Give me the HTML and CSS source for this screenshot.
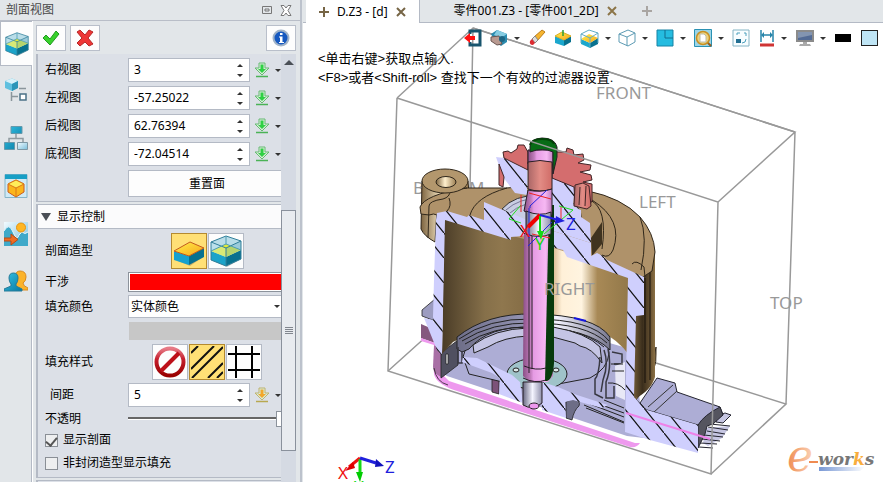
FILE: index.html
```
<!DOCTYPE html>
<html lang="zh-CN">
<head>
    <meta charset="UTF-8">
    <meta name="viewport" content="width=device-width, initial-scale=1.0">
    <title>剖面视图</title>
    <link rel="stylesheet" href="styles.css">
</head>
<body>
    <!-- Shared symbols -->
    <svg class="defs" width="0" height="0" aria-hidden="true">
        <defs>
            <linearGradient id="blue" x1="0" y1="0" x2="1" y2="1">
                <stop offset="0" stop-color="#35c3e6"/><stop offset="1" stop-color="#0878a0"/>
            </linearGradient>
            <linearGradient id="gold" x1="0" y1="0" x2="1" y2="1">
                <stop offset="0" stop-color="#fff04a"/><stop offset="1" stop-color="#f7a51c"/>
            </linearGradient>
            <linearGradient id="sky" x1="0" y1="0" x2="1" y2="1">
                <stop offset="0" stop-color="#f2fbff"/><stop offset="1" stop-color="#79bfdc"/>
            </linearGradient>
        </defs>
        <symbol id="section-box" viewBox="0 0 32 32">
            <path d="M3 26l14 6 14-8-3-3z" fill="#555" opacity=".35"/>
            <path d="M1 7l15-6 15 5v10l-15 7-15-7z" fill="#b9dde8"/>
            <path d="M1 16l15 6v9L1 25z" fill="#1ba3c9"/>
            <path d="M16 22l15-7v9l-15 7z" fill="#08718f"/>
            <path d="M1 16l15-7 15 6-15 7z" fill="#e5ec35"/>
            <path d="M1 7l15 6v9L1 16z" fill="#c0e6f1" opacity=".35"/>
            <path d="M16 13l15-7v9l-15 7z" fill="#6fb2c6" opacity=".4"/>
            <path d="M1 7l15-6 15 5-15 7zM1 7v18l15 6 15-7V6M16 13v18" fill="none" stroke="#317f9a"/>
            <path d="M1 16l15-7 15 6M16 1v8" fill="none" stroke="#4c9cb2"/>
        </symbol>
        <symbol id="arrow-in" viewBox="0 0 16 16">
            <path d="M5 1h6v5h4l-7 7-7-7h4z" fill="#d9efd6" stroke="currentColor" opacity=".8"/>
            <path class="arrow-core" d="M6.500 2.500h3V7h2.500l-4 4-4-4h2.500z"/>
            <path d="M2 14.500h12" stroke="currentColor" stroke-width="1.500"/>
        </symbol>
    </svg>

    <div class="app">
        <aside class="panel">
            <header class="panel-title">
                <span>剖面视图</span>
                <span class="panel-tools">
                    <button type="button" aria-label="还原"><svg width="10" height="8" viewBox="0 0 10 8"><path d="M.5.500h9v7h-9zM3 3h4v2H3z" fill="none" stroke="#777"/></svg></button>
                    <button type="button" aria-label="关闭"><svg width="12" height="11" viewBox="0 0 12 11"><path d="M1 .5h3l2 2.500 2-2.500h3L8 5.500l3 5H8L6 8l-2 2.500H1l3-5z" fill="#fff" stroke="#777"/></svg></button>
                </span>
            </header>
            <div class="panel-main">
                <nav class="rail">
                    <button type="button" class="rail-tab active" aria-label="剖面">
                        <svg width="24" height="24"><use href="#section-box"/></svg>
                    </button>
                    <button type="button" class="rail-tab" aria-label="历史">
                        <svg width="24" height="24" viewBox="0 0 24 24">
                            <path d="M1 3l7-2.500L14 3v7l-6 3-7-3z" fill="#5fc0df"/><path d="M1 3l7-2.500L14 3 8 6z" fill="#d7f1f9"/><path d="M8 6l6-3v7l-6 3z" fill="#2c95b8"/>
                            <path d="M15 10.500h7M7.500 14v9M8 18.500h6" stroke="#8b969c" stroke-width="1.500"/><path d="M16 16h6v6h-6z" fill="#fff" stroke="#4b7287" stroke-width="1.500"/>
                        </svg>
                    </button>
                    <button type="button" class="rail-tab" aria-label="装配">
                        <svg width="24" height="24" viewBox="0 0 24 24">
                            <path d="M12 7v5M5 17v-4.500h14V17" fill="none" stroke="#909ba0" stroke-width="1.500"/>
                            <path d="M7 .5h11v7H7zM.5 16.500h10v7H.5z" fill="url(#blue)" stroke="#6699ab"/><path d="M13.500 16.500h10v7h-10z" fill="url(#sky)" stroke="#7e98a4"/>
                        </svg>
                    </button>
                    <button type="button" class="rail-tab" aria-label="显示">
                        <svg width="24" height="24" viewBox="0 0 24 24">
                            <path d="M1 .5h22v23H1z" fill="#cfeaf5" stroke="#86b4c8"/><path d="M1 .5h22V5H1z" fill="#179fc5"/>
                            <path d="M4 10l8-4 8 4v8l-8 5-8-5z" fill="#fbb51c" stroke="#cb5b20"/><path d="M4 10l8-4 8 4-8 4z" fill="#ffed59" stroke="#d97819"/><path d="M12 14v9" stroke="#d97819"/>
                        </svg>
                    </button>
                    <button type="button" class="rail-tab" aria-label="图像">
                        <svg width="24" height="24" viewBox="0 0 24 24">
                            <path d="M0 0h24v24H0z" fill="url(#sky)"/><path d="M0 9q5-9 9 1t6 3l3-3q3 3 6 0v14H0z" fill="#3fa9c9"/><path d="M0 9q5-9 9 1t6 3l3-3q3 3 6 0" fill="none" stroke="#e7f6fb"/>
                            <circle cx="17" cy="5.500" r="4.500" fill="#ffb622" stroke="#e8930f"/><path d="M0 16h7v-4l7 5.500L7 23v-4H0z" fill="#ef6d22" stroke="#b94a15"/>
                        </svg>
                    </button>
                    <button type="button" class="rail-tab" aria-label="角色">
                        <svg width="24" height="24" viewBox="0 0 24 24">
                            <path d="M11 6q1-5 5-5 6 0 6 6 0 4-3 6 0 3 5 5v2H12z" fill="#fbb32a" stroke="#d98a1e"/>
                            <path d="M5 8q0-5 4.500-5T14 8q0 4-2 6v2l6 3v2H0v-2l7-3v-2Q5 12 5 8z" fill="url(#blue)" stroke="#277b98"/>
                        </svg>
                    </button>
                </nav>

                <div class="panel-content">
                    <div class="actions">
                        <button type="button" class="action" aria-label="确定"><svg width="18" height="16" viewBox="0 0 18 16"><path d="M1 8l3-3 4 4 6-8 3 3-9 11z" fill="#38d12b" stroke="#219a21"/></svg></button>
                        <button type="button" class="action" aria-label="取消"><svg width="18" height="18" viewBox="0 0 18 18"><path d="M1 3l3-2 5 5 4-5 4 2-5 6 5 6-4 2-4-4-5 4-3-3 5-5z" fill="#ee3636" stroke="#b62828"/></svg></button>
                        <button type="button" class="action info" aria-label="信息"><svg width="18" height="18" viewBox="0 0 18 18"><circle cx="9" cy="9" r="7.500" fill="#1558c0" stroke="#9fb2c8" stroke-width="2"/><path d="M8 4h2.500v2H8zM7 7.500h3.500V13H12v1H7v-1h1V8.500H7z" fill="#fff"/></svg></button>
                    </div>
                    <div class="scroll-area">
                        <form class="sections">
                            <section class="group">
                                <div class="group-body">
                                    <div class="row"><label for="right">右视图</label><span class="spin"><input type="text" id="right" value="3"><i></i></span><button type="button" class="pick" aria-label="拾取右视图"><svg width="16" height="16"><use href="#arrow-in"/></svg></button><i class="caret"></i></div>
                                    <div class="row"><label for="left">左视图</label><span class="spin"><input type="text" id="left" value="-57.25022"><i></i></span><button type="button" class="pick" aria-label="拾取左视图"><svg width="16" height="16"><use href="#arrow-in"/></svg></button><i class="caret"></i></div>
                                    <div class="row"><label for="back">后视图</label><span class="spin"><input type="text" id="back" value="62.76394"><i></i></span><button type="button" class="pick" aria-label="拾取后视图"><svg width="16" height="16"><use href="#arrow-in"/></svg></button><i class="caret"></i></div>
                                    <div class="row"><label for="bottom">底视图</label><span class="spin"><input type="text" id="bottom" value="-72.04514"><i></i></span><button type="button" class="pick" aria-label="拾取底视图"><svg width="16" height="16"><use href="#arrow-in"/></svg></button><i class="caret"></i></div>
                                    <div class="row"><span class="label"></span><button type="button" class="reset">重置面</button></div>
                                </div>
                            </section>

                            <section class="group">
                                <h2><i class="fold"></i>显示控制</h2>
                                <div class="group-body display">
                                    <div class="row">
                                        <span class="label">剖面造型</span>
                                        <div class="choices">
                                            <button type="button" class="choice on" aria-label="切除">
                                                <svg width="32" height="32" viewBox="0 0 32 32"><path d="M5 26l12 5 13-9-3-4z" fill="#765" opacity=".4"/><path d="M1 16l15 5v9L1 25z" fill="#16a1ce"/><path d="M16 21l15-8v9l-15 8z" fill="#07718f"/><path d="M1 16L17 7l14 6-15 8z" fill="url(#gold)" stroke="#c35a1d"/></svg>
                                            </button>
                                            <button type="button" class="choice" aria-label="透明"><svg width="32" height="32"><use href="#section-box"/></svg></button>
                                        </div>
                                    </div>
                                    <div class="row"><label for="clash">干涉</label><button type="button" id="clash" class="swatch red" aria-label="干涉颜色"></button></div>
                                    <div class="row"><label for="fill">填充颜色</label><span class="pull"><select id="fill"><option>实体颜色</option></select><i class="caret"></i></span></div>
                                    <div class="row"><span class="label"></span><button type="button" class="swatch gray" aria-label="颜色" disabled></button></div>
                                    <div class="row">
                                        <span class="label">填充样式</span>
                                        <div class="choices">
                                            <button type="button" class="choice" aria-label="无">
                                                <svg width="32" height="32" viewBox="0 0 32 32"><defs><linearGradient id="no" x1="0" y1="0" x2="0" y2="1"><stop offset="0" stop-color="#e77a86"/><stop offset=".4" stop-color="#c51f2d"/><stop offset="1" stop-color="#990000"/></linearGradient></defs><circle cx="16" cy="16" r="13.500" fill="none" stroke="url(#no)" stroke-width="4"/><path d="M25 7L7 25" stroke="#bd1019" stroke-width="4"/></svg>
                                            </button>
                                            <button type="button" class="choice on" aria-label="斜线">
                                                <svg width="32" height="32" viewBox="0 0 32 32"><path d="M0 7l7-7M0 23L23 0M1 32L32 1M17 32l15-15M26 32l6-6" stroke="#111" stroke-width="2"/></svg>
                                            </button>
                                            <button type="button" class="choice" aria-label="网格">
                                                <svg width="32" height="32" viewBox="0 0 32 32"><path d="M8 0v32M24 0v32M0 8h32M0 24h32" stroke="#000" stroke-width="2"/></svg>
                                            </button>
                                        </div>
                                    </div>
                                    <div class="row"><label for="gap" class="sub">间距</label><span class="spin"><input type="text" id="gap" value="5"><i></i></span><button type="button" class="pick amber" aria-label="拾取间距"><svg width="16" height="16"><use href="#arrow-in"/></svg></button><i class="caret"></i></div>
                                    <div class="row"><label for="opaque">不透明</label><input type="range" id="opaque" min="0" max="100" value="100"></div>
                                    <label class="check"><input type="checkbox" checked>显示剖面</label>
                                    <label class="check"><input type="checkbox">非封闭造型显示填充</label>
                                </div>
                            </section>
                            <section class="group next"></section>
                        </form>
                        <div class="scrollbar"><i class="up"></i><div class="thumb"><i></i></div></div>
                    </div>
                </div>
            </div>
        </aside>

        <main class="workspace">
            <div class="tabs">
                <div class="tab current">
                    <svg width="10" height="10" viewBox="0 0 10 10"><path d="M5 0v10M0 5h10" stroke="#766545" stroke-width="2"/></svg>
                    <span>D.Z3 - [d]</span>
                    <button type="button" aria-label="关闭 D.Z3"><svg width="10" height="10" viewBox="0 0 10 10"><path d="M1 1l8 8M9 1L1 9" stroke="#766545" stroke-width="2"/></svg></button>
                </div>
                <div class="tab">
                    <span>零件001.Z3 - [零件001_2D]</span>
                    <button type="button" aria-label="关闭 零件001.Z3"><svg width="10" height="10" viewBox="0 0 10 10"><path d="M1 1l8 8M9 1L1 9" stroke="#8c7548" stroke-width="2"/></svg></button>
                </div>
                <button type="button" class="new-tab" aria-label="新建"><svg width="10" height="10" viewBox="0 0 10 10"><path d="M5 0v10M0 5h10" stroke="#a9a5a2" stroke-width="2"/></svg></button>
            </div>

            <div class="viewport">
                <svg class="scene" viewBox="303 23 580 459" aria-label="D.Z3">
                    <defs>
                        <pattern id="hatch" width="20" height="25" patternUnits="userSpaceOnUse" patternTransform="translate(4 8)">
                            <path d="M0 0h20v25H0z" fill="#cfcffd"/><path d="M0 0l20 25" stroke="#111" stroke-width="1.200"/>
                        </pattern>
                        <linearGradient id="bore-l"><stop offset="0" stop-color="#4a3c27"/><stop offset=".5" stop-color="#86704a"/><stop offset=".7" stop-color="#8f774e"/><stop offset="1" stop-color="#846c45"/></linearGradient>
                        <linearGradient id="bore-r"><stop offset="0" stop-color="#c9a878"/><stop offset=".15" stop-color="#fff0d8"/><stop offset=".4" stop-color="#fff4e0"/><stop offset=".6" stop-color="#a88956"/><stop offset="1" stop-color="#927849"/></linearGradient>
                        <linearGradient id="outer"><stop offset="0" stop-color="#6e5836"/><stop offset=".4" stop-color="#3b2e1c"/><stop offset=".7" stop-color="#5b482c"/><stop offset="1" stop-color="#8b7044"/></linearGradient>
                        <linearGradient id="boss"><stop offset="0" stop-color="#7c633f"/><stop offset=".45" stop-color="#fff0ce"/><stop offset="1" stop-color="#9b7d50"/></linearGradient>
                        <linearGradient id="shaft"><stop offset="0" stop-color="#8b4f86"/><stop offset=".25" stop-color="#c17cbc"/><stop offset=".35" stop-color="#e69be4"/><stop offset=".75" stop-color="#f6b8f3"/><stop offset="1" stop-color="#c27ec0"/></linearGradient>
                        <linearGradient id="salmon"><stop offset="0" stop-color="#aa6666"/><stop offset=".5" stop-color="#e28c85"/><stop offset="1" stop-color="#d06c67"/></linearGradient>
                        <linearGradient id="steel"><stop offset="0" stop-color="#696982"/><stop offset=".5" stop-color="#f4f4ff"/><stop offset="1" stop-color="#8f8fab"/></linearGradient>
                        <linearGradient id="ring"><stop offset="0" stop-color="#6e6e88"/><stop offset=".5" stop-color="#9797b8"/><stop offset=".65" stop-color="#f4f4ff"/><stop offset="1" stop-color="#77778f"/></linearGradient>
                        <linearGradient id="e-orange"><stop offset="0" stop-color="#ef8b51"/><stop offset="1" stop-color="#fbd4b8"/></linearGradient>
                        <linearGradient id="bar"><stop offset="0" stop-color="#7898d5"/><stop offset="1" stop-color="#fff"/></linearGradient>
                    </defs>

                    <!-- Back edges of the bounding box -->
                    <g class="wire">
                        <path d="M397 98l76-70 322 104-77 70M473 28l-3 160M388 371l40-36M656 363l130 41-75 70M795 132l-9 272"/>
                    </g>
                    <g class="plane">
                        <text x="596" y="99">FRONT</text>
                        <text x="413" y="194">BOTTOM</text>
                        <text x="639" y="208">LEFT</text>
                        <text x="770" y="309">TOP</text>
                    </g>

                    <!-- Lower housing -->
                    <g stroke="#222" stroke-width=".8" stroke-linejoin="round">
                        <path d="M422 310l13-11v22l-13-5z" fill="#9c9cc0"/>
                        <path d="M421 324l14 6v13l-14-5z" fill="#85587f" stroke="none"/>
                        <path d="M421 338l14 5 6 8v22l8 8 186 62h5q-3 5-10 4l-176-57q-22-8-20-20v-25l-13-4z" fill="#ee99ee" stroke="none"/>
                        <path d="M434 345l7 8v24q-8-4-8-10z" fill="#a86fa5" stroke="none"/>
                        <path d="M434 368q2 14 14 17" fill="none"/>
                        <path d="M441 350l88-30 105 30 10 88-17-2-180-60-6-4z" fill="#adadd5" stroke="none"/>
                        <path d="M441 353l17-13v25l-17 13z" fill="#505060"/>
                        <path d="M446 354h2v10h-2z" fill="#fff"/>
                        <path d="M492 375l7 3v16l-7-2z" fill="#7c5279"/>
                        <path d="M566 402l8-4q7 3 5 8-5 4-7 14l-6-2z" fill="#6d6d86"/>
                    </g>

                    <!-- Connector -->
                    <g stroke="#252530" stroke-linejoin="round">
                        <path d="M717 416l8-3 6 2-8 8-7-1z" fill="#c6c6e2"/>
                        <path d="M706 428l24-2-8 12-14 8-5-3z" fill="#c6c6e2" stroke="none"/>
                        <path d="M710 424l20 2M708 427l20 3M707 431l18 3M704 435l19 2M702 439l18 2M700 443l17 1M699 447l14 1" fill="none"/>
                        <path d="M657 378l18 5 2 9 43 15 3 8-25 10-51-15-7-7z" fill="#adadd5"/>
                        <path d="M698 425q6-10 22-18l3 8-10 9-6 2-2 8-7 14z" fill="#55555f"/>
                        <path d="M673 385l-25 22M677 391l-24 22" stroke="#333"/>
                    </g>

                    <!-- Outer wall and upper face of the cover -->
                    <path d="M656 347q3 30-22 55v-10q19-16 22-45z" fill="#b79a6b" stroke="#30271a"/>
                    <path d="M643 277l12-30v130q-4 14-21 22v-84z" fill="url(#outer)"/>
                    <path d="M645 278v105M650 268v112" stroke="#17110a"/>
                    <path d="M422 181l-1 48q3 7 14 13l2-32 32-16-1-13z" fill="url(#boss)" stroke="#2b2216"/>
                    <path d="M467 188h39l60-4 22 7q34 7 52 26 14 16 15 35l-3 19-9 6-50-20-80-14-62-17-13-5q2-7-1-6-3-2-8 0l-8-1-1-7q5-12 45-19z" fill="#af926a" stroke="#30271a"/>
                    <path d="M429 206q0-5 14-7 7-2 7-8l17-3M429 206l-1 32M449 198q3 8-2 13M470 215q5-18 37-27M640 217q8 20 1 53M590 200q18 8 12 49M592 200q32 20 21 50-4 9-11 5M632 264q4-5 12 3l1 10" fill="none" stroke="#30271a"/>
                    <path d="M591 238l11-16v22l-10 12z" fill="#40331f"/>
                    <ellipse cx="445" cy="181" rx="23" ry="12" fill="#b3976d" stroke="#30271a"/>
                    <ellipse cx="446" cy="182" rx="10" ry="5.500" fill="url(#boss)" stroke="#30271a"/>
                    <path d="M502 209q12-14 38-14 28 0 38 13 7 9-1 22l-40 0z" fill="#c8cde3" stroke="#333"/>
                    <path d="M506 210q13-12 35-12 26 1 35 15M510 213q12-11 32-10 20 0 28 12" fill="none" stroke="#777799"/>

                    <!-- Bore -->
                    <path d="M444 218l84 22v83q-44 2-75 19l-11 12z" fill="url(#bore-l)"/>
                    <path d="M550 247l79 24v84q-21-30-79-40z" fill="url(#bore-r)"/>

                    <!-- Floor ring -->
                    <g stroke="#222">
                        <path d="M463 357q2-16 28-27 46-16 96-2 22 8 22 25-1 16-19 25l-58 11-63-15z" fill="#adadd5"/>
                        <path d="M457 337q30-24 76-23 62 1 77 23v13q-22-22-78-23-44-1-63 22l-7 3-5-3z" fill="url(#ring)"/>
                        <path d="M459 339q29-21 73-20 60 0 77 22M462 341q30-19 70-18 54 0 75 20M465 344q28-18 66-17 50 0 73 20" fill="none"/>
                        <path d="M473 345q22-16 55-17v8q-24 1-40 11l-14 6zM553 327q34 6 47 20l2 16q-10-15-22-17l-5-3-22-6z" fill="#c5c5e4"/>
                        <path d="M600 357q-1 18-5 22v15l8 4M604 350q5 14-1 30l-2 12M608 349q4 18-2 33v16h8v-12M612 352l10 2v10h-8M458 347v16h4v-12" fill="none" stroke="#383842" stroke-width="1.500"/>
                        <path d="M615 366l10-4v38l-9-4z" fill="#e8e8f6" stroke="none"/>
                        <path d="M611 364h12M612 371h12M608 383q10-1 17 7" fill="none"/>
                        <ellipse cx="537" cy="374" rx="30" ry="16" fill="#9fc3c9"/>
                        <ellipse cx="516" cy="370" rx="3" ry="2" fill="#dce9e9"/><ellipse cx="556" cy="370" rx="3" ry="2" fill="#dce9e9"/>
                        <path d="M584 405l40 17M586 408l38 15M590 404l34 13M596 403l28 10M604 400l20 8" fill="none"/>
                    </g>

                    <!-- Cut faces -->
                    <g fill="url(#hatch)">
                        <path d="M437 213l10-2 20 6 2-2 15 5v-18l43 18v14l-5 2-11 1v3l-66-20-3 135-5-5-4-33 1-37 2-60z"/>
                        <path d="M550 230l41 13v13l6-3 6 3 4 4 37 17v38l-8 1-2 81 13 13 51 15v28l-48-13-25-8 1-55 2-99-61-21-4-7-15-4z"/>
                        <path d="M424 318l9 2 9 33-5-3z"/>
                        <path d="M496 157l8 1 23 12v25l-12-2-12-16z"/>
                        <path d="M551 175l24 9-2 23 8 3v7l9 6 1 20-41-13z"/>
                        <path d="M463 357l14 1 35 17 8 7 3 21-24-9 1-16-8-5-30-11z"/>
                        <path d="M542 382l16 5 19 8 31 10-6 3-29-8-8 2 1 16-24-8z"/>
                    </g>

                    <!-- Gear -->
                    <g fill="#d46d6e" stroke="#402426" stroke-linejoin="round">
                        <path d="M499 164l5 13-1 10-4-2zM504 158l-1-6 5-1 3 2 6-4 1-4 6 0 4 7v18l-12-6z"/>
                        <path d="M553 152l13 0 1-4 6 2 1 5 9-1 1 6-6 3 13 2-1 5-10 2 11 3 1 5-9 2 9 2v17l-4 6-13-4-1-16-22-9z"/>
                        <path d="M575 185l8-2 6 3 2 20-4 3-13-3z" fill="url(#salmon)"/>
                        <path d="M580 187l-1 18M586 186l-1 20" fill="none"/>
                    </g>

                    <!-- Shaft -->
                    <g stroke="#271e27">
                        <path d="M524 234h29v142l-5 6h-19l-6-6z" fill="url(#shaft)" stroke="none"/>
                        <path d="M549 205h5v158q-1 16-7 18h-2z" fill="#073a0c" stroke="none"/>
                        <path d="M529 235v138M532 235v134M524 366q12 5 22 2M523 378q12 6 23 2" fill="none"/>
                        <path d="M523 382h19v21q-9 8-19 2z" fill="url(#steel)"/>
                        <path d="M528 150h25v14h-25z" fill="url(#shaft)"/>
                        <path d="M528 162q12-3 24 0v27q-12 4-24 0z" fill="url(#salmon)"/>
                        <path d="M528 190q12 3 24-1v26q-13 4-28-4z" fill="url(#shaft)"/>
                        <path d="M526 211q14 6 25 1v22q-12 5-25 0z" fill="url(#steel)"/>
                        <path d="M530 147q-1-8 12-9 13 0 15 9v10l-4 17v-22q-10-5-23 0z" fill="#086b16"/>
                        <path d="M530 145q2-6 12-6 10 0 12 5" fill="none" stroke="#044409" stroke-width="2"/>
                        <ellipse cx="534" cy="406" rx="5" ry="3" fill="#ee99ee"/>
                    </g>

                    <path d="M626 413l84 26" stroke="#ee82e8" stroke-width="2"/>
                    <path d="M574 318l12 3" stroke="#1616dd" stroke-width="2"/>

                    <!-- Front edges of the bounding box -->
                    <path class="wire" d="M397 98l321 104-7 272-323-103 9-273M473 28l322 104"/>
                    <g class="plane"><text x="544" y="295">RIGHT</text></g>

                    <!-- Axes -->
                    <g fill="none">
                        <path d="M509 219l12-14M509 219l12 4M544 234l29-24-14-4" stroke="#22e022"/>
                        <path d="M530 208v-2l17-16M529 208v30M528 246l24-24" stroke="#2222dd"/>
                        <path d="M521 195v17M529 193l22 6M561 207v12M532 234l18 4" stroke="#ee2222"/>
                        <path d="M540 215l-12 12" stroke="#ee0000" stroke-width="4"/><path d="M540 216v19" stroke="#16d816" stroke-width="2"/><path d="M540 215l22 6" stroke="#2020dd" stroke-width="2"/>
                    </g>
                    <path d="M537 231h7l-3 9z" fill="#16d816"/><path d="M556 216l9 5-10 3z" fill="#2020dd"/>
                    <g class="axis"><text x="520" y="237" fill="#ee1111">X</text><text x="535" y="250" fill="#16d816">Y</text><text x="566" y="230" fill="#2020dd">Z</text></g>
                    <g stroke-width="3"><path d="M360 458l-11 9" stroke="#ee1111"/><path d="M360 459v15" stroke="#16d816"/><path d="M360 458l16 5" stroke="#2020dd"/></g>
                    <path d="M353 462l-8 9 10-3z" fill="#d00"/><path d="M356 472h7l-3 10z" fill="#0c0"/><path d="M376 459l8 7-9 1z" fill="#11b"/>
                    <g class="axis"><text x="338" y="479" fill="#ee1111">X</text><text x="354" y="493" fill="#16d816">Y</text><text x="385" y="473" fill="#2020dd">Z</text></g>

                    <!-- Logo -->
                    <path d="M819 467h46l-5 4h-41z" fill="url(#bar)"/>
                    <text class="logo-e" x="787" y="471" fill="url(#e-orange)">e</text>
                    <path d="M809 462h9" stroke="#ef8b51" stroke-width="2"/>
                    <text class="logo-text" x="818" y="465">wor<tspan fill="#f9ad3d">k</tspan>s</text>
                </svg>

                <div class="toolbar">
                    <button type="button" aria-label="退出"><svg width="18" height="18" viewBox="0 0 18 18"><path d="M6 5V2h10v14H6v-3" fill="none" stroke="#18546d" stroke-width="3"/><path d="M0 9l6-5v3h5v4H6v3z" fill="#f11"/></svg></button>
                    <button type="button" class="menu" aria-label="渲染"><svg width="18" height="18" viewBox="0 0 18 18"><path d="M1 5l6-4 10 4v8l-6 4-6-4z" fill="#2b8baf"/><path d="M7 1l10 4-6 4-7-3z" fill="#86cce2"/><path d="M1 8l8-1 3 8-5 1-6-4z" fill="#b99a91" stroke="#6a5652"/><circle cx="12" cy="10" r="3" fill="#1d6583"/></svg><i class="caret"></i></button>
                    <button type="button" aria-label="擦除"><svg width="18" height="18" viewBox="0 0 18 18"><path d="M6 8l8-7 3 2-8 9z" fill="#f6b52f" stroke="#bc7c18"/><path d="M4 10l3-3 3 4-3 3z" fill="#ddd" stroke="#888"/><path d="M2 12l2-2 3 4-2 2q-4 0-3-4z" fill="#dc2c32"/></svg></button>
                    <button type="button" aria-label="基准面"><svg width="18" height="18" viewBox="0 0 18 18"><path d="M1 7l9 4v6l-9-3z" fill="#1ba7cd"/><path d="M10 11l7-4v6l-7 4z" fill="#08718f"/><path d="M1 7l7-4 9 4-7 4z" fill="url(#gold)" stroke="#d9ae24"/><path d="M9 1v6" stroke="#2a9d36" stroke-width="1.500"/></svg></button>
                    <button type="button" class="menu" aria-label="剖切"><svg width="19" height="19" viewBox="0 0 19 19"><path d="M1 10l9 4v5l-9-4z" fill="#1ba7cd"/><path d="M10 14l8-5v6l-8 4z" fill="#08718f"/><path d="M1 10l8-5 9 4-8 5z" fill="url(#gold)"/><path d="M1 5l8-4 9 3-8 5zM1 5v9M10 9v9M18 4v10" fill="none" stroke="#62acc4"/></svg><i class="caret"></i></button>
                    <button type="button" class="menu" aria-label="着色"><svg width="18" height="18" viewBox="0 0 18 18"><path d="M1 5l9-4 7 3v9l-7 4-9-4z" fill="#fff" stroke="#5d9bb4"/><path d="M1 5l8 3 8-4M9 8v9" fill="none" stroke="#5d9bb4"/></svg><i class="caret"></i></button>
                    <button type="button" class="menu" aria-label="视口"><svg width="18" height="18" viewBox="0 0 18 18"><path d="M1 1h16v16H1z" fill="#25bce0" stroke="#1783a5"/><path d="M9 1v8h8" fill="none" stroke="#126d8d"/></svg><i class="caret"></i></button>
                    <button type="button" class="menu" aria-label="缩放"><svg width="18" height="18" viewBox="0 0 18 18"><path d="M.5.500h17v17H.5z" fill="#9bd5e8" stroke="#2a91b3"/><path d="M13 13l4 4" stroke="#965d22" stroke-width="2"/><circle cx="9" cy="9" r="6.500" fill="#eed27a" stroke="#c89024" stroke-width="1.500"/><path d="M6 5h4l2 2v6H6z" fill="#fff" stroke="#bba"/></svg><i class="caret"></i></button>
                    <button type="button" aria-label="定向"><svg width="18" height="18" viewBox="0 0 18 18"><path d="M1 1h16v16H1z" fill="#f7fdff" stroke="#84b4c5"/><path d="M4 10h5v4H4z" fill="#236f92"/><path d="M5 6V4h3M12 4h2v3M14 10q0 4-4 4" fill="none" stroke="#4ca0bd"/></svg></button>
                    <button type="button" class="menu" aria-label="标注"><svg width="16" height="18" viewBox="0 0 16 18"><path d="M2 1v12M14 1v12M3 6h10" stroke="#2785aa" stroke-width="1.500"/><path d="M2 6l3-3v6zM14 6l-3-3v6z" fill="#2785aa"/><path d="M1 16h14" stroke="#cf3535" stroke-width="3"/></svg><i class="caret"></i></button>
                    <button type="button" class="menu" aria-label="显示器"><svg width="18" height="18" viewBox="0 0 18 18"><path d="M0 1h18v12H0z" fill="#8b8b8b"/><path d="M2 3h14v8H2z" fill="#536b95"/><path d="M2 3h14v3L2 9z" fill="#8395b1"/><path d="M7 13h4v2h3l1 2H3l1-2h3z" fill="#aaa"/></svg><i class="caret"></i></button>
                    <button type="button" aria-label="线色"><i class="ink"></i></button>
                    <button type="button" aria-label="面色"><i class="face"></i></button>
                </div>
                <div class="prompt">
                    <p>&lt;单击右键&gt;获取点输入.</p>
                    <p>&lt;F8&gt;或者&lt;Shift-roll&gt; 查找下一个有效的过滤器设置.</p>
                </div>
            </div>
        </main>
    </div>
</body>
</html>
```
FILE: styles.css
```
* {
    box-sizing: border-box;
}

body {
    margin: 0;
    font: 12px/16px "Noto Sans", "Noto Sans CJK SC", sans-serif;
    color: #000;
    background-color: #e2e6e9;
}

button {
    margin: 0;
    padding: 0;
    border: none;
    background: none;
    font: inherit;
    color: inherit;
    cursor: pointer;
}

svg {
    display: block;
}

.defs {
    position: absolute;
}

.app {
    display: flex;
    height: 100vh;
    overflow: hidden;
}

/* Left panel */
.panel {
    display: flex;
    flex-direction: column;
    flex: none;
    width: 302px;
    border-right: 2px solid #bcc2cc;
}

.panel-title {
    display: flex;
    justify-content: space-between;
    align-items: center;
    flex: none;
    height: 21px;
    padding: 0 8px 0 6px;
    border-bottom: 1px solid #b9bec8;
    color: #484848;
}

.panel-tools {
    display: flex;
    align-items: center;
    gap: 8px;
}

.panel-main {
    display: flex;
    flex: 1;
    min-height: 0;
}

.rail {
    display: flex;
    flex-direction: column;
    flex: none;
    width: 32px;
    border-right: 1px solid #b4bac5;
}

.rail-tab {
    display: flex;
    justify-content: center;
    align-items: center;
    flex: none;
    height: 48px;
}

.rail-tab.active {
    height: 45px;
    margin-right: -1px;
    border: 1px solid #b4bac5;
    border-right: none;
    background-color: #fdfdfd;
}

.panel-content {
    display: flex;
    flex-direction: column;
    flex: 1;
    min-width: 0;
    padding: 0 4px 0 3px;
    border-left: 1px solid #fff;
}

.actions {
    display: flex;
    flex: none;
    gap: 4px;
    padding: 4px 0 3px;
}

.action {
    display: flex;
    justify-content: center;
    align-items: center;
    width: 30px;
    height: 26px;
    border: 1px solid #b9bfca;
    background-color: #fdfdfd;
}

.action.info {
    margin-left: auto;
}

.scroll-area {
    display: flex;
    flex: 1;
    min-height: 0;
}

.sections {
    flex: 1;
    min-width: 0;
    overflow: hidden;
}

.group {
    margin-bottom: 2px;
    border-left: 2px solid #b4bac5;
    border-bottom: 1px solid #b4bac5;
    background-color: #dce0e7;
    overflow: hidden;
}

.group.next {
    height: 8px;
    border-top: 1px solid #b4bac5;
}

.group h2 {
    display: flex;
    align-items: center;
    gap: 6px;
    height: 25px;
    margin: 0;
    padding-left: 3px;
    border-top: 1px solid #b4bac5;
    border-bottom: 1px solid #b4bac5;
    background-color: #fbfbfc;
    font-size: 12px;
    font-weight: normal;
}

.fold {
    border: 5px solid transparent;
    border-top: 8px solid #4a4f56;
    border-bottom: none;
}

.group-body {
    display: flex;
    flex-direction: column;
    gap: 4px;
    padding: 4px 0 4px 7px;
}

.group-body.display {
    gap: 3px;
}

.row {
    display: flex;
    align-items: center;
}

.row > label,
.row > .label {
    flex: none;
    width: 83px;
}

.row > .sub {
    padding-left: 5px;
}

.spin {
    display: flex;
    align-items: center;
    flex: none;
    width: 122px;
    height: 24px;
    padding-right: 6px;
    border: 1px solid #b4bac5;
    background-color: #fff;
}

.spin input {
    flex: 1;
    min-width: 0;
    padding: 0 5px;
    border: none;
    outline: none;
    background: none;
    font: inherit;
}

/* Up and down arrows of a number box */
.spin i {
    display: flex;
    flex-direction: column;
    gap: 7px;
}

.spin i::before,
.spin i::after {
    content: "";
    border: 3px solid transparent;
    border-top: none;
    border-bottom-color: #333;
}

.spin i::after {
    border-top: 3px solid #333;
    border-bottom: none;
}

.pick {
    flex: none;
    margin: 0 5px 0 4px;
    color: #4bb356;
    fill: #2fd044;
}

.pick.amber {
    color: #b8a850;
    fill: #f2a72c;
}

.caret {
    flex: none;
    border: 3px solid transparent;
    border-top-color: #333;
    border-bottom: none;
}

.reset,
.swatch,
.choices,
.pull {
    flex: none;
    width: 158px;
}

.reset {
    height: 27px;
    border: 1px solid #b4bac5;
    background-color: #fdfdfd;
}

.choices {
    display: flex;
    justify-content: center;
    gap: 1px;
}

.choice {
    width: 36px;
    height: 36px;
    padding: 1px;
    border: 1px solid #b4bac5;
    background-color: #fdfdfd;
}

.choice.on {
    border-color: #b48a30;
    background-color: #ffe076;
}

.swatch {
    height: 20px;
}

.swatch.red {
    border: 1px solid #8c939c;
    outline: 1px solid #fff;
    outline-offset: -2px;
    background-color: #ff0000;
}

.swatch.gray {
    background-color: #c7c7c7;
    background-clip: content-box;
    padding: 1px;
}

.pull {
    display: flex;
    align-items: center;
    height: 23px;
    padding-right: 5px;
    border: 1px solid #b4bac5;
    background-color: #fff;
}

.pull select {
    flex: 1;
    padding: 0 2px;
    border: none;
    background: none;
    font: inherit;
    appearance: none;
}

input[type="range"] {
    flex: none;
    width: 158px;
    height: 17px;
    margin: 0;
    background: linear-gradient(#666 0 2px, #fff 2px 3px) 0 7px / 100% 3px no-repeat;
    appearance: none;
}

input[type="range"]::-webkit-slider-thumb {
    width: 10px;
    height: 16px;
    border: 1px solid #8c939c;
    background-color: #fff;
    appearance: none;
}

.check {
    display: flex;
    align-items: center;
    gap: 5px;
    height: 20px;
}

.check input {
    display: flex;
    justify-content: center;
    width: 13px;
    height: 13px;
    margin: 0;
    border: 1px solid #8a8f96;
    background-color: #eeeff0;
    appearance: none;
}

.check input:checked::before {
    content: "";
    width: 5px;
    height: 9px;
    border: solid #555;
    border-width: 0 2px 2px 0;
    transform: rotate(40deg);
}

.scrollbar {
    display: flex;
    flex-direction: column;
    align-items: center;
    flex: none;
    width: 15px;
    background-color: #d5dae3;
}

.up {
    flex: none;
    margin: 6px 0 145px;
    border: 5px solid transparent;
    border-bottom-color: #4a4f56;
    border-top: none;
}

.thumb {
    display: flex;
    justify-content: center;
    align-items: center;
    width: 15px;
    height: 241px;
    border: 1px solid #8a919c;
    background-color: #e8ebef;
}

.thumb i {
    width: 8px;
    height: 7px;
    background: repeating-linear-gradient(#81868e 0 1px, transparent 1px 2px);
}

/* Document area */
.workspace {
    display: flex;
    flex-direction: column;
    flex: 1;
    min-width: 0;
    padding-left: 1px;
}

.tabs {
    display: flex;
    flex: none;
    height: 23px;
    padding-left: 3px;
    border-bottom: 1px solid #b4bac5;
}

.tab {
    display: flex;
    align-items: center;
    gap: 8px;
    padding: 0 16px 0 34px;
    white-space: nowrap;
}

.tab.current {
    height: 23px;
    padding: 0 13px;
    border-right: 1px solid #b4bac5;
    background-color: #fff;
}

.new-tab {
    padding: 0 9px;
}

.viewport {
    position: relative;
    flex: 1;
    min-height: 0;
    background-color: #fff;
}

.scene {
    position: absolute;
    inset: 0;
    width: 100%;
    height: 100%;
}

.wire {
    fill: none;
    stroke: #999;
    stroke-width: 1.5px;
}

.plane {
    font-size: 17px;
    fill: #999;
}

.axis {
    font: 17px "Noto Sans", sans-serif;
}

.logo-e {
    font: italic 44px "DejaVu Serif", serif;
}

.logo-text {
    font: italic bold 17px "DejaVu Serif", serif;
    fill: #777;
}

.toolbar {
    display: flex;
    position: relative;
    justify-content: flex-end;
    height: 26px;
    padding: 4px 1px 0 0;
}

.toolbar button {
    display: flex;
    justify-content: center;
    align-items: center;
    flex: none;
    width: 26px;
}

.toolbar .menu {
    gap: 6px;
    width: 38px;
}

.ink {
    width: 16px;
    height: 8px;
    background-color: #000;
}

.face {
    width: 17px;
    height: 16px;
    border: 1px solid #222;
    background-color: #bfe5f5;
}

.prompt {
    position: relative;
    padding-left: 15px;
    font: 13px/19px "Liberation Sans", "Noto Sans CJK SC", sans-serif;
}

.prompt p {
    margin: 0;
}
```
